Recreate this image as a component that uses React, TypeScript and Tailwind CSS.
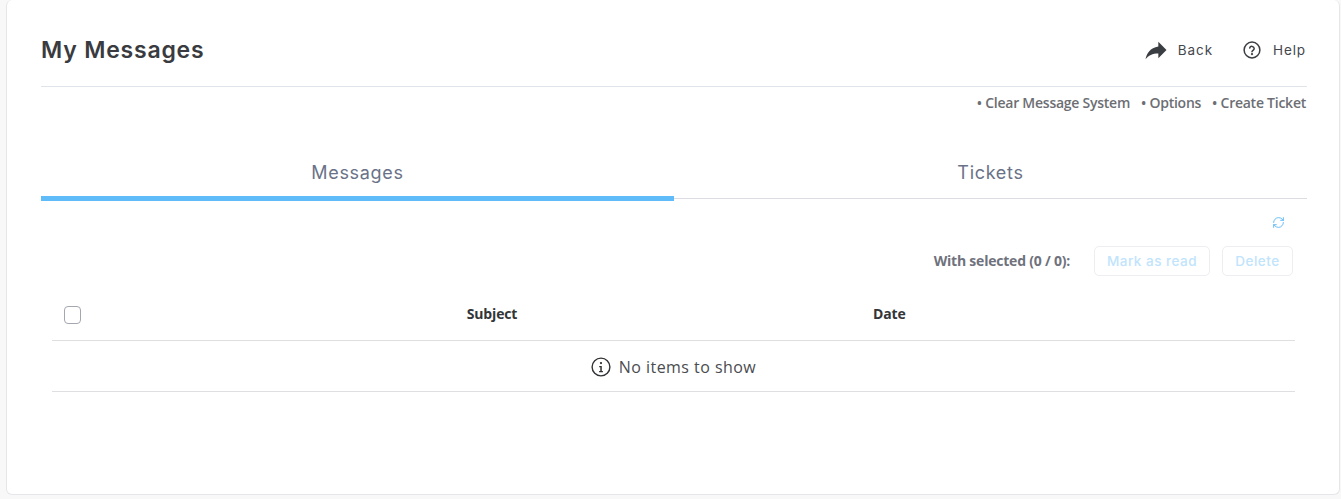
import { RefreshCw } from "lucide-react";

const heading = "font-['Inter',sans-serif]";

function HelpIcon() {
  return (
    <svg width="18" height="18" viewBox="0 0 18 18" fill="none" stroke="#3a3d42" strokeWidth="1.5" strokeLinecap="round">
      <circle cx="9" cy="9" r="7.9" />
      <path d="M6.7 7a2.3 2.3 0 0 1 4.5.6c0 1.5-2.2 1.9-2.2 3.2" />
      <circle cx="9" cy="13.2" r="0.4" fill="#3a3d42" />
    </svg>
  );
}

export default function App() {
  return (
    <div className="h-[499px] w-full overflow-hidden bg-[#f8f8f8] pl-[6px] pr-px font-['Open_Sans',sans-serif]">
      <div className="h-[495px] rounded-[6px] border border-t-0 border-[#e6e6ea] bg-white pl-[34px] pr-[32px]">
        <div className="flex h-[86px] items-start justify-between pt-[29px]">
          <h1 className={`${heading} h-[42px] text-[23px] leading-[42px] font-semibold tracking-[0.8px] text-[#393b40]`}>My Messages</h1>
          <div className={`${heading} flex h-[42px] items-center text-[13.5px] tracking-[0.9px] text-[#44474c]`}>
            <svg width="28" height="28" viewBox="0 0 24 24" fill="#3a3d42" className="-mr-[4px]">
              <path d="M14 9V5l7 7-7 7v-4.1c-5 0-8.5 1.6-11 5.1 1-5 4-10 11-11z" />
            </svg>
            <span className="ml-[12px]">Back</span>
            <span className="ml-[30px] mr-[12px]"><HelpIcon /></span>
            <span className="pr-px">Help</span>
          </div>
        </div>
        <div className="flex h-[32px] items-center justify-end gap-[11px] border-t border-[#dfe3ea] pr-px text-[14px] font-semibold tracking-[-0.25px] text-[#6c6e73]">
          <span>• Clear Message System</span>
          <span>• Options</span>
          <span>• Create Ticket</span>
        </div>

        <div className={`${heading} relative mt-[28px] grid h-[53px] grid-cols-2 border-b border-[#dcdde2] text-[18px] tracking-[0.7px] text-[#6a7288]`}>
          <div className="relative flex h-[52px] items-center justify-center">
            Messages
            <div className="absolute bottom-[-3px] left-0 right-0 h-[5px] bg-[#5fbcf8]" />
          </div>
          <div className="flex h-[52px] items-center justify-center">Tickets</div>
        </div>

        <div className="flex h-[47px] items-center justify-end pr-[22px]">
          <RefreshCw size={13} color="#5fb8f5" strokeWidth={1.7} />
        </div>

        <div className="flex h-[30px] items-center justify-end pr-[14px]">
          <span className="mr-[24px] -translate-y-px text-[14px] font-bold tracking-[-0.22px] text-[#6f727d]">With selected (0 / 0):</span>
          <button className={`${heading} h-[30px] w-[116px] rounded-[5px] border border-[#edeef2] text-[13.5px] font-medium tracking-[0.5px] text-[#bfe4fc]`}>Mark as read</button>
          <button className={`${heading} ml-[12px] h-[30px] w-[71px] rounded-[5px] border border-[#edeef2] text-[13.5px] font-medium tracking-[0.5px] text-[#bfe4fc]`}>Delete</button>
        </div>

        <div className="ml-[11px] mr-[12px]">
          <div className="grid h-[65px] grid-cols-[59px_762px_1fr] items-center border-b border-[#dfdfe2] pt-[11px] text-[14px] font-bold tracking-[-0.15px] text-[#333538]">
            <div className="pl-[12px]">
              <div className="h-[18px] w-[17px] translate-y-px rounded-[4px] border border-[#a5a7b0]" />
            </div>
            <div className="text-center">Subject</div>
            <div>Date</div>
          </div>
          <div className="flex h-[51px] items-center justify-center border-b border-[#dfdfe2] pt-[2px] text-[16px] tracking-[0.45px] text-[#4a4c50]">
            <svg width="20" height="20" viewBox="0 0 20 20" fill="none" className="mr-[8px]">
              <circle cx="10" cy="10" r="8.9" stroke="#2f3134" strokeWidth="1.4" />
              <circle cx="10" cy="6.1" r="1.15" fill="#2f3134" />
              <path d="M8.2 9h2.6v5h1.1v1.2H8.1V14h1.2v-3.8H8.2z" fill="#2f3134" />
            </svg>
            No items to show
          </div>
        </div>
      </div>
    </div>
  );
}
